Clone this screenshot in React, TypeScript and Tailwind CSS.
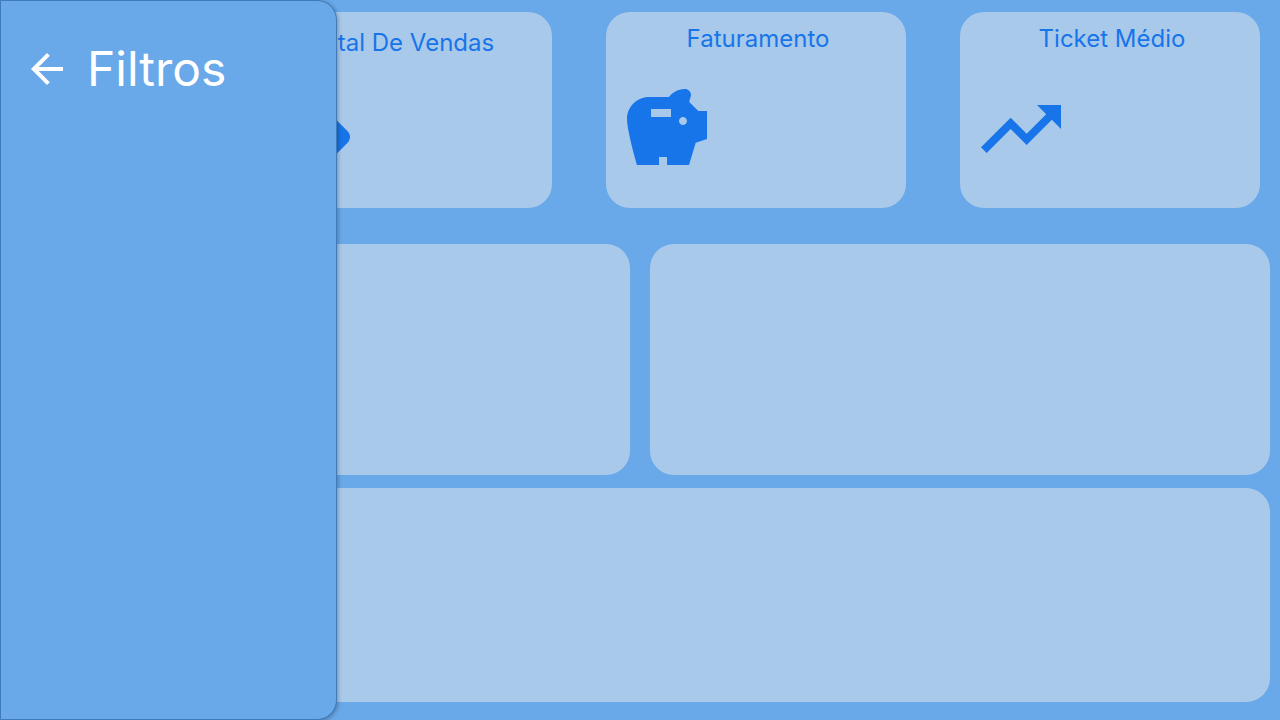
import type { ReactNode } from "react";

const ICONS = {
  tag: "M21.41 11.58l-9-9C12.05 2.22 11.55 2 11 2H4c-1.1 0-2 .9-2 2v7c0 .55.22 1.05.59 1.42l9 9c.36.36.86.58 1.41.58s1.05-.22 1.41-.59l7-7c.37-.36.59-.86.59-1.41s-.23-1.06-.59-1.42zM5.5 7C4.67 7 4 6.33 4 5.5S4.67 4 5.5 4 7 4.67 7 5.5 6.33 7 5.5 7z",
  savings:
    "M19.83 7.5l-2.27-2.27c.07-.42.18-.81.32-1.15.11-.26.15-.56.09-.87C17.84 2.49 17.14 1.99 16.4 2c-1.59.03-3 .81-3.9 2h-5C4.46 4 2 6.46 2 9.5S4.5 21 4.5 21H10v-2h2v2h5.5l1.68-5.59 2.82-.94V7.5h-2.17zM13 9H8V7h5v2zm3 2c-.55 0-1-.45-1-1s.45-1 1-1 1 .45 1 1-.45 1-1 1z",
  trending:
    "M16 6l2.29 2.29-4.88 4.88-4-4L2 16.59 3.41 18l6-6 4 4 6.3-6.29L22 12V6z",
  back: "M20 11H7.83l5.59-5.59L12 4l-8 8 8 8 1.41-1.41L7.83 13H20v-2z",
};

function Icon({ path, className }: { path: string; className: string }) {
  return (
    <svg viewBox="0 0 24 24" fill="currentColor" aria-hidden="true" className={className}>
      <path d={path} />
    </svg>
  );
}

function Panel({ children, className = "" }: { children?: ReactNode; className?: string }) {
  return <section className={`rounded-3xl bg-[#a9c9eb] ${className}`}>{children}</section>;
}

function MetricCard({ title, icon, className }: { title: string; icon: string; className: string }) {
  return (
    <Panel className={`flex flex-col gap-7 text-[#1775e9] ${className}`}>
      <h2 className="pl-1 text-center text-2xl leading-7">{title}</h2>
      <Icon path={icon} className="size-24" />
    </Panel>
  );
}

export default function App() {
  return (
    <div className="relative flex min-h-screen flex-col overflow-hidden bg-[#69a8e9] pt-3 pb-[18px] font-['Inter',sans-serif]">
      <main className="flex grow flex-col">
        <div className="mb-9 grid min-h-[196px] grid-cols-3 gap-[54px] pr-5 pl-[252px]">
          <MetricCard title="Total De Vendas" icon={ICONS.tag} className="pt-[17px] pr-[14px] pl-[10px]" />
          <MetricCard title="Faturamento" icon={ICONS.savings} className="px-[13px] pt-[13px]" />
          <MetricCard title="Ticket Médio" icon={ICONS.trending} className="px-[13px] pt-[13px]" />
        </div>
        <div className="mb-[13px] grid min-h-[231px] grid-cols-2 gap-5 px-[10px]">
          <Panel />
          <Panel />
        </div>
        <div className="flex grow px-[10px]">
          <Panel className="grow" />
        </div>
      </main>

      <aside className="absolute inset-y-0 left-0 w-[337px] rounded-r-[20px] border border-[#3f7ab9] bg-[#69a8e9] pt-10 pl-[22px] text-white shadow-[1px_1px_4px_rgba(0,0,0,0.3)]">
        <header className="flex items-center gap-4">
          <button type="button" aria-label="Voltar">
            <Icon path={ICONS.back} className="size-12" />
          </button>
          <h1 className="text-5xl leading-14">Filtros</h1>
        </header>
      </aside>
    </div>
  );
}
